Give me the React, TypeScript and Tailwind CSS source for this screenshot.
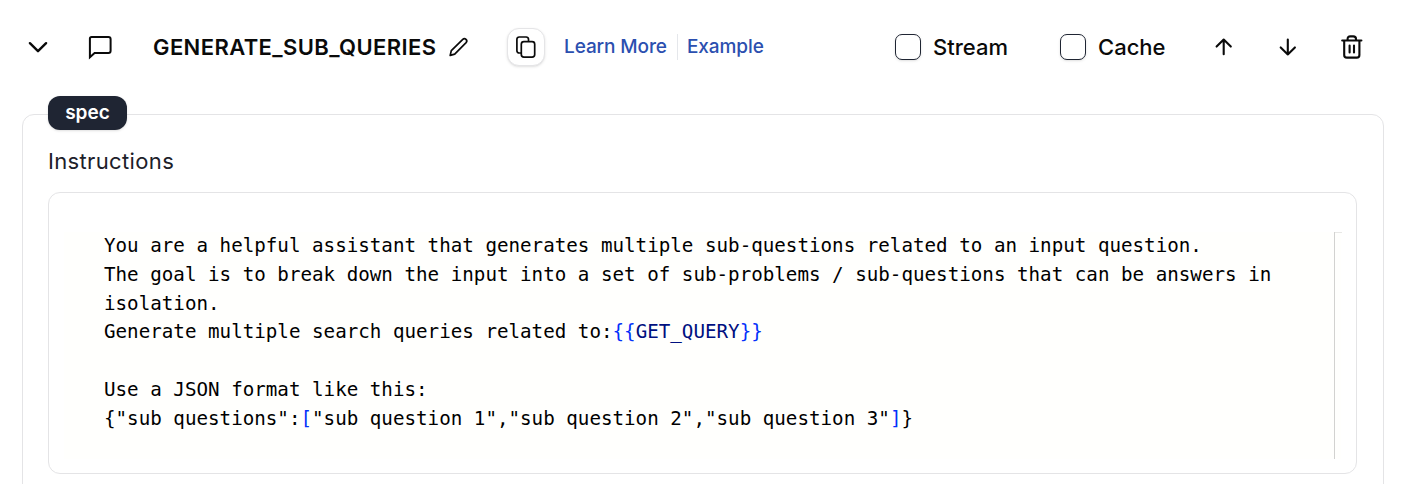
import React from "react";

const stroke = {
  fill: "none",
  stroke: "#0a0a0a",
  strokeLinecap: "round" as const,
  strokeLinejoin: "round" as const,
};

function ChevronDown() {
  return (
    <svg className="ml-[26px] size-6 shrink-0" viewBox="0 0 24 24" {...stroke} strokeWidth="2.4">
      <path d="M3.9 8.2 12 16.2l8.1-8" />
    </svg>
  );
}

function MessageIcon() {
  return (
    <svg className="ml-[37px] size-[26px] shrink-0" viewBox="0 0 26 26" {...stroke} strokeWidth="2" strokeLinejoin="miter">
      <path d="M2.9 23.2V4.6Q2.9 2.9 4.6 2.9H21.4Q23.6 2.9 23.6 5V16.8Q23.6 19 21.4 19H7.6Z" />
    </svg>
  );
}

function PencilIcon() {
  return (
    <svg className="ml-[11px] size-[22px] shrink-0" viewBox="0 0 22 22" {...stroke} strokeWidth="1.7">
      <path d="M2.2 19.4 3.3 14.6 14.8 3.4a2.3 2.3 0 0 1 3.3 3.2L6.7 18.1Z" />
    </svg>
  );
}

function CopyIcon() {
  return (
    <svg className="size-6" viewBox="0 0 24 24" {...stroke} strokeWidth="1.7">
      <path d="M6.6 18H5.2a2.3 2.3 0 0 1-2.3-2.3V4.3A2.3 2.3 0 0 1 5.2 2h7a2.3 2.3 0 0 1 2.3 2.3V5.6" />
      <rect x="7.3" y="6.6" width="13.4" height="15.6" rx="2.6" />
    </svg>
  );
}

function Checkbox({ label, className }: { label: string; className: string }) {
  return (
    <label className={"flex shrink-0 items-center gap-3 text-[22px] font-medium text-[#0a0a0a] " + className}>
      <span className="size-[26px] shrink-0 rounded-[7px] border border-[#1f2533] bg-white shadow-sm" />
      <span className="whitespace-nowrap">{label}</span>
    </label>
  );
}

function Header() {
  return (
    <header className="flex h-[94px] items-center">
      <ChevronDown />
      <MessageIcon />
      <h1 className="ml-10 w-[284px] shrink-0 whitespace-nowrap text-[22px] font-semibold tracking-[0.4px] text-[#0a0a0a]">
        GENERATE_SUB_QUERIES
      </h1>
      <PencilIcon />
      <button className="ml-[37px] flex size-[38px] shrink-0 items-center justify-center rounded-xl border border-[#e5e5e7] bg-white shadow-sm">
        <CopyIcon />
      </button>
      <nav className="ml-[19px] flex w-[202px] shrink-0 items-center whitespace-nowrap text-[19px] font-medium tracking-[-0.1px] text-[#2b4faf]">
        <a className="w-[113px]">Learn More</a>
        <span className="h-[26px] w-px bg-[#e5e7eb]" />
        <a className="ml-[9px]">Example</a>
      </nav>
      <Checkbox label="Stream" className="ml-[129px] w-[114px]" />
      <Checkbox label="Cache" className="ml-[51px] w-[106px]" />
      <svg className="ml-[46px] size-6 shrink-0" viewBox="0 0 24 24" {...stroke} strokeWidth="2.1">
        <path d="M11.7 19.2V4.6M4.6 11.6l7.1-7 7.1 7" />
      </svg>
      <svg className="ml-10 size-6 shrink-0" viewBox="0 0 24 24" {...stroke} strokeWidth="2.1">
        <path d="M11.8 4.6v14.8M4.7 12.4l7.1 7 7.1-7" />
      </svg>
      <svg className="ml-[39px] size-[26px] shrink-0" viewBox="0 0 26 26" {...stroke} strokeWidth="2.1">
        <path d="M3.2 6.5h19.2M5.2 6.5v14.4Q5.2 23.6 7.8 23.6h10q2.6 0 2.6-2.7V6.5M8.6 6.5V5q0-2.6 2.7-2.6h3q2.7 0 2.7 2.6v1.5M10.6 11.6v6.8M15 11.6v6.8" />
      </svg>
    </header>
  );
}

function Editor() {
  return (
    <div className="mt-[17px] h-[282px] w-[1309px] rounded-xl border border-[#e4e4e6] px-[15px] pt-[39px]">
      <div className="flex h-[227px] bg-[#fffffd]">
        <pre className="w-[1270px] shrink-0 pl-10 font-['DejaVu_Sans_Mono',monospace] text-[19.2px] leading-[28.8px] tracking-[0.005px] text-black">
          {"You are a helpful assistant that generates multiple sub-questions related to an input question.\n"}
          {"The goal is to break down the input into a set of sub-problems / sub-questions that can be answers in\n"}
          {"isolation.\n"}
          {"Generate multiple search queries related to:"}
          <span className="text-[#0431fa]">{"{{"}</span>
          <span className="text-[#001080]">GET_QUERY</span>
          <span className="text-[#0431fa]">{"}}"}</span>
          {"\n\nUse a JSON format like this:\n"}
          {'{"sub questions":'}
          <span className="text-[#0431fa]">[</span>
          {'"sub question 1","sub question 2","sub question 3"'}
          <span className="text-[#0431fa]">]</span>
          {"}"}
        </pre>
        <div className="w-2 shrink-0 border-l border-[#d2d2d0]">
          <div className="h-px bg-[#e8e8e6]" />
        </div>
      </div>
    </div>
  );
}

export default function App() {
  return (
    <main className="h-[484px] w-[1402px] overflow-hidden bg-white font-[Inter,sans-serif]">
      <Header />
      <section className="relative ml-[22px] mt-5 h-[400px] w-[1362px] rounded-xl border border-[#e4e4e6] px-[25px] pt-[32px]">
        <span className="absolute -top-[19px] left-[25px] flex h-[34px] w-[79px] items-center justify-center rounded-xl bg-[#1f2533] text-[19px] font-semibold text-white shadow-sm">
          spec
        </span>
        <h2 className="h-[28px] text-[22px] leading-7 tracking-[0.35px] text-[#1c2029]">Instructions</h2>
        <Editor />
      </section>
    </main>
  );
}
